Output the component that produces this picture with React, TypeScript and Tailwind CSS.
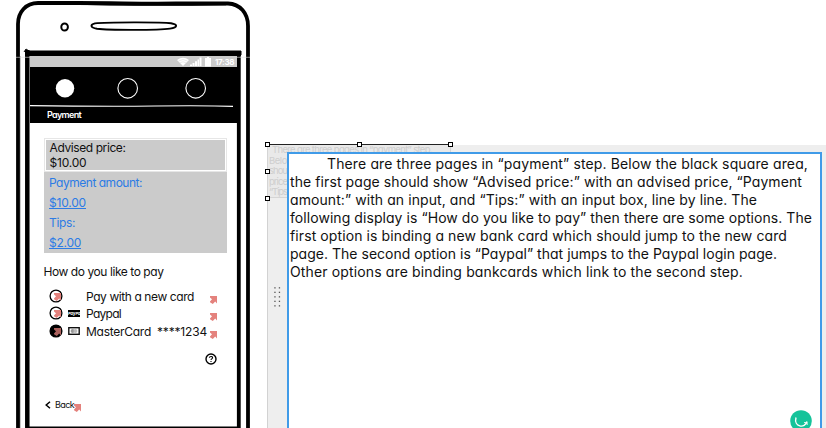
import { useLayoutEffect, useRef, type ReactNode } from "react";
import clsx from "clsx";

/** Text whose tracking is adjusted so that it spans the given width. */
function Fit({ w, className, children }: { w: number; className?: string; children: string }) {
  const ref = useRef<HTMLSpanElement>(null);
  useLayoutEffect(() => {
    const el = ref.current;
    if (!el) return;
    el.style.letterSpacing = "0px";
    const natural = el.getBoundingClientRect().width;
    el.style.letterSpacing = `${(w - natural) / children.length}px`;
  }, [w, children]);
  return (
    <span ref={ref} className={clsx("inline-block whitespace-pre", className)}>
      {children}
    </span>
  );
}

function PhoneFrame() {
  return (
    <svg className="absolute left-0 top-0" width="260" height="428" fill="none">
      <path d="M18 428V24C18 12 26 3 38 3H78C120 3 140 4 176 3.5H228C240 4 248 13 248 26V428" stroke="#000" strokeWidth="3.8" />
      <path d="M66 3.2Q130 5.6 226 4.2" stroke="#000" strokeWidth="2" />
      <ellipse cx="64.6" cy="27" rx="3.3" ry="3.6" stroke="#000" strokeWidth="2" />
      <path d="M95 23.4C106 22.1 162 22.1 171 23.2C178 24.4 178 27.4 170 28.6C158 30.3 110 30.3 97 28.8C90 27.6 90 24.6 95 23.4Z" stroke="#000" strokeWidth="1.9" />
      <path d="M27.3 428V50" stroke="#000" strokeWidth="4.5" />
      <path d="M24 52L26 49L29 51H241V55L239 56V428" stroke="#000" strokeWidth="1" />
      <path d="M25 53.6H241" stroke="#000" strokeWidth="5" />
      <path d="M238.8 51V428" stroke="#000" strokeWidth="3.8" />
      <path d="M26 427.6H240" stroke="#000" strokeWidth="2" />
      <path d="M20.5 56V428" stroke="#c8c8c8" strokeWidth="1" />
      <path d="M16 57.3H30M236 57.3H250" stroke="#ddd" strokeWidth="0.6" />
    </svg>
  );
}

function StatusBar() {
  return (
    <div className="flex h-[11px] items-center justify-end bg-[#cbcbcb] pr-[3px]">
      <svg width="36" height="11" fill="#fff" className="mr-[2px]">
        <path d="M0 4Q6 -0.5 12 4L6 10Z" />
        <path d="M1.5 5Q6 2 10.5 5M3 6.8Q6 4.8 9 6.8" stroke="#dedede" strokeWidth="0.6" fill="none" />
        <path d="M13 10V8.6H15V10ZM15.5 10V7H17.5V10ZM18 10V5.2H20V10ZM20.5 10V3.4H22V10ZM22.5 10V1.4H24.5V10Z" />
        <path d="M28 2H30V1H32V2H34V10.5H28Z" />
      </svg>
      <Fit w={19} className="pt-px text-[8px] font-bold leading-[11px] text-white">17:38</Fit>
    </div>
  );
}

function Steps() {
  return (
    <svg width="207" height="41" fill="none" className="block">
      <circle cx="35" cy="21.3" r="9.2" fill="#fff" />
      <circle cx="97.7" cy="21.3" r="9.8" stroke="#fff" strokeWidth="1.1" />
      <circle cx="165.7" cy="21.3" r="9.8" stroke="#fff" strokeWidth="1.1" />
      <path d="M-1 38.6Q70 39.5 125 39T203 39.4" stroke="#fff" strokeWidth="1.1" />
    </svg>
  );
}

function LinkArrow({ className }: { className?: string }) {
  return (
    <svg width="7" height="8" viewBox="0 0 7 8" className={clsx("shrink-0", className)} fill="#e4827d">
      <path d="M0 0H7V7.4L5.2 5.6L2.8 8L0 6.2V5.4L2 3.2L0 1.4Z" />
    </svg>
  );
}

function Radio({ on }: { on?: boolean }) {
  return (
    <div className="relative h-[14px] w-[14px] shrink-0">
      <svg width="14" height="14" className="block">
        <circle cx="7" cy="7" r="5.9" fill={on ? "#000" : "#fff"} stroke="#000" strokeWidth="1.3" />
      </svg>
      <LinkArrow className={clsx("absolute left-[5px] top-[4px]", on && "opacity-75")} />
    </div>
  );
}

function Option({ on, badge, children }: { on?: boolean; badge?: ReactNode; children: ReactNode }) {
  return (
    <div className="flex h-[17.3px] items-center pl-[19px]">
      <Radio on={on} />
      <div className="flex w-[23px] items-center pl-[5px] pt-px">{badge}</div>
      <div className="w-[124px] whitespace-nowrap pt-px leading-[17px]">{children}</div>
      <LinkArrow className="mt-[8px]" />
    </div>
  );
}

function Phone() {
  return (
    <div className="relative h-[428px] w-[267px] shrink-0">
      <PhoneFrame />
      <div className="relative ml-[30px] w-[207px] pt-[56px] text-[12px] text-[#111]">
        <StatusBar />
        <div className="h-[56px] bg-black">
          <Steps />
          <div className="pl-[17px] text-[9px] font-semibold leading-[14px] text-white">
            <Fit w={34}>Payment</Fit>
          </div>
        </div>
        <div className="ml-[14px] mt-[15px] h-[34px] w-[183px] border border-[#e6e6e6] bg-white p-px">
          <div className="h-[30px] bg-[#cbcbcb] pl-[3.5px] leading-[15px]">
            <div><Fit w={76}>Advised price:</Fit></div>
            <div><Fit w={37}>$10.00</Fit></div>
          </div>
        </div>
        <div className="ml-[14px] h-[80.5px] w-[183px] bg-[#cbcbcb] pl-[5px] pt-px leading-[20px] text-[#2c7be5]">
          <div><Fit w={93}>Payment amount:</Fit></div>
          <div><Fit w={37} className="underline">$10.00</Fit></div>
          <div><Fit w={26}>Tips:</Fit></div>
          <div><Fit w={32} className="underline">$2.00</Fit></div>
        </div>
        <div className="mt-[9px] pl-[13.5px] leading-[20px]">
          <Fit w={120}>How do you like to pay</Fit>
        </div>
        <div className="mt-[6px]">
          <Option><Fit w={108}>Pay with a new card</Fit></Option>
          <Option
            badge={<span className="h-[7px] w-[12px] bg-black text-center text-[4px] font-bold italic leading-[7px] text-white">PayPal</span>}
          >
            <Fit w={35}>Paypal</Fit>
          </Option>
          <Option
            on
            badge={
              <svg width="12" height="8">
                <rect x="0.8" y="0.7" width="10.4" height="6.6" fill="#fff" stroke="#111" strokeWidth="1.4" />
                <circle cx="4.6" cy="4" r="2" fill="#999" />
                <circle cx="7.4" cy="4" r="2" fill="#bbb" />
              </svg>
            }
          >
            <Fit w={65}>MasterCard</Fit>
            <Fit w={50} className="ml-[6px]">****1234</Fit>
          </Option>
        </div>
        <div className="mt-[14px] flex justify-end pr-[20px]">
          <svg width="12" height="12" fill="none" stroke="#000">
            <circle cx="6" cy="6" r="5" strokeWidth="1.4" />
            <path d="M4.3 4.7C4.5 3 7.7 3 7.6 4.8C7.5 6 6 5.8 6 7M6 8V9" strokeWidth="1.1" />
          </svg>
        </div>
        <div className="mt-[31px] flex items-center pl-[15px] text-[9px] leading-[13px]">
          <svg width="6" height="8" fill="none" stroke="#000" strokeWidth="1.5" className="mr-[4px] mt-px">
            <path d="M5 0.7L1.2 4L5 7.3" />
          </svg>
          <Fit w={19}>Back</Fit>
          <LinkArrow className="mt-[8px]" />
        </div>
      </div>
    </div>
  );
}

function Handle({ className }: { className: string }) {
  return <div className={clsx("absolute h-[5px] w-[5px] border border-black bg-white", className)} />;
}

const lines: [string, number][] = [
  ["There are three pages in “payment” step. Below the black square area,", 481],
  ["the first page should show “Advised price:” with an advised price, “Payment", 512],
  ["amount:” with an input, and “Tips:” with an input box, line by line. The", 467],
  ["following display is “How do you like to pay” then there are some options. The", 522],
  ["first option is binding a new bank card which should jump to the new card", 497],
  ["page. The second option is “Paypal” that jumps to the Paypal login page.", 487],
  ["Other options are binding bankcards which link to the second step.", 453],
];

function Note() {
  return (
    <div className="relative mt-[145px] h-[283px] w-[559px] border-l border-[#d2d2d2] bg-[#eeeeee]">
      <div className="absolute -left-px -top-px h-[54px] w-[184px] border border-[#d5d5d5] border-t-[#222] bg-[#e9e9e9] pl-px text-[9.5px] leading-[10.6px] text-[#cecece]">
        <div className="pl-[3px]"><Fit w={160}>There are three pages in “payment” step.</Fit></div>
        <div><Fit w={18}>Belo</Fit></div>
        <div><Fit w={18}>shou</Fit></div>
        <div><Fit w={18}>price</Fit></div>
        <div><Fit w={18}>“Tips</Fit></div>
      </div>
      <Handle className="-left-[3px] -top-[3px]" />
      <Handle className="left-[89px] -top-[3px]" />
      <Handle className="left-[180px] -top-[3px]" />
      <Handle className="-left-[3px] top-[24px]" />
      <Handle className="-left-[3px] top-[51px]" />
      <div className="relative flex pt-[7px]">
        <div className="w-[19px] shrink-0 pl-[6px] pt-[135px]">
          <svg width="7" height="21" fill="#555">
            {[0, 4.5, 9, 13.5, 18].map((y) => (
              <g key={y}>
                <rect x="0.3" y={y + 0.2} width="1.3" height="1.3" />
                <rect x="4.8" y={y + 0.2} width="1.3" height="1.3" />
              </g>
            ))}
          </svg>
        </div>
        <div className="relative h-[276px] w-[535px] overflow-hidden border-2 border-b-0 border-[#409be8] bg-white pl-px pt-px text-[14px] leading-[18px] text-[#111]">
          {lines.map(([text, w], i) => (
            <div key={i} className={clsx("h-[18px]", i === 0 && "pl-[37px]")}>
              <Fit w={w}>{text}</Fit>
            </div>
          ))}
          <svg width="22" height="22" className="absolute left-[501px] top-[256px]" fill="none">
            <circle cx="11" cy="11" r="10.8" fill="#15c39a" />
            <path d="M6 7.5C3.5 17 15 19 17 11.5" stroke="#fff" strokeWidth="1.4" />
            <path d="M14 12.5H17.2V15" stroke="#fff" strokeWidth="0.8" />
          </svg>
        </div>
      </div>
    </div>
  );
}

export default function App() {
  return (
    <div className="flex h-[428px] w-[826px] overflow-hidden bg-white font-['Inter','Liberation_Sans',sans-serif] [font-feature-settings:'cv11','calt'_0]">
      <Phone />
      <Note />
    </div>
  );
}
